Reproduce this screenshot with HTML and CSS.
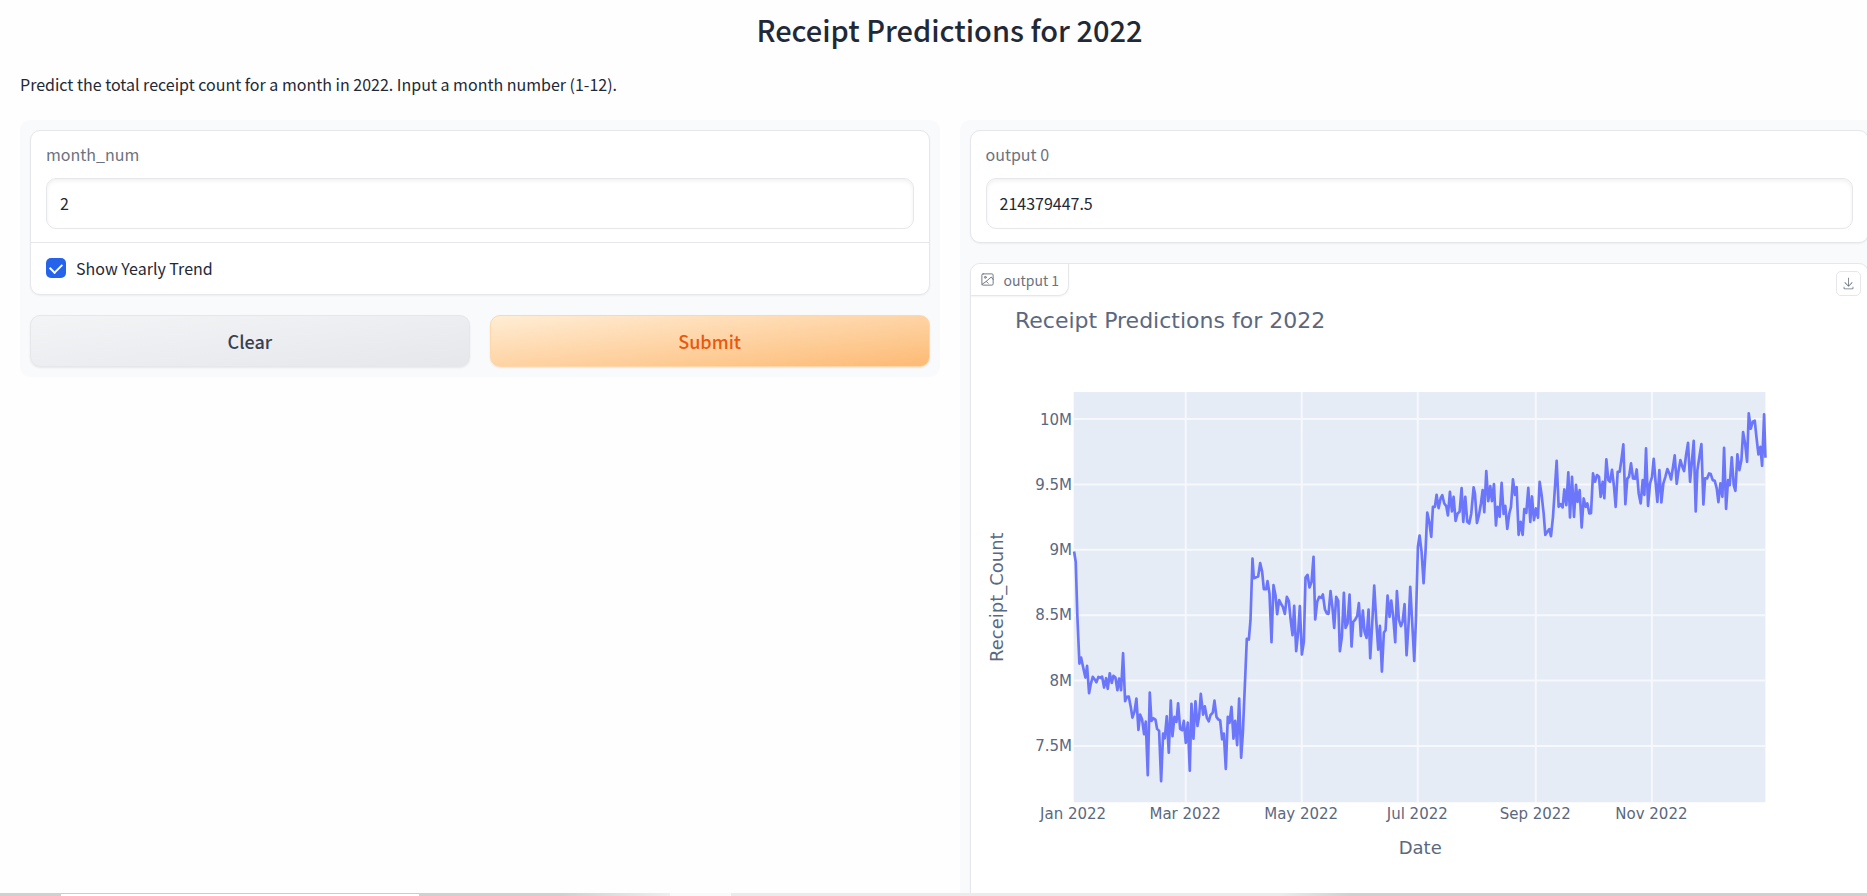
FILE: index.html
```html
<!DOCTYPE html>
<html lang="en">
<head>
<meta charset="utf-8">
<title>Receipt Predictions for 2022</title>
<link rel="stylesheet" href="styles.css">
</head>
<body>
<main class="app">
  <h1 class="title">Receipt Predictions for 2022</h1>
  <p class="description">Predict the total receipt count for a month in 2022. Input a month number (1-12).</p>
  <div class="columns">
    <form class="panel">
      <div class="card">
        <div class="field">
          <label class="label" for="month">month_num</label>
          <input class="textbox" id="month" type="text" value="2">
        </div>
        <label class="check-row"><input class="check" type="checkbox" checked><span>Show Yearly Trend</span></label>
      </div>
      <div class="actions">
        <button class="btn" type="button">Clear</button>
        <button class="btn btn-primary" type="button">Submit</button>
      </div>
    </form>
    <section class="panel">
      <div class="card">
        <div class="field">
          <label class="label" for="out0">output 0</label>
          <input class="textbox" id="out0" type="text" value="214379447.5" readonly>
        </div>
      </div>
      <div class="card plot-card">
        <div class="plot-label">
          <svg class="icon" viewBox="0 0 24 24" fill="none" stroke="currentColor" stroke-width="1.5" stroke-linecap="round" stroke-linejoin="round"><rect x="3" y="3" width="18" height="18" rx="2"/><circle cx="8.5" cy="8.5" r="1.5"/><path d="M3 20l7-5 3 3M10 15l8-7 3 4"/></svg>
          <span>output 1</span>
        </div>
        <button class="download" type="button" aria-label="Download">
          <svg viewBox="0 0 32 32" fill="currentColor"><path d="M26 24v4H6v-4H4v4a2 2 0 0 0 2 2h20a2 2 0 0 0 2-2v-4zm0-10l-1.41-1.41L17 20.17V2h-2v18.17l-7.59-7.58L6 14l10 10l10-10z"/></svg>
        </button>
        <svg class="chart" viewBox="971 264 897 641" role="img" aria-label="Receipt count by date">
          <rect class="plot-bg" x="1073.6" y="392" width="691.4" height="410"/>
          <path class="grid" d="M1185.6 392V802M1301.6 392V802M1417.5 392V802M1535.5 392V802M1651.5 392V802M1073.6 419H1765M1073.6 484.3H1765M1073.6 549.7H1765M1073.6 615H1765M1073.6 680.2H1765M1073.6 745.7H1765"/>
          <g class="trend" transform="translate(1060 520) scale(.33333)">
            <path d="M42 94L47 125L52 290L58 430L63 412L70 445L76 472L81 437L87 519L92 492L98 470L104 478L109 486L115 470L121 473L126 469L132 502L138 474L143 506L149 459L155 488L160 467L166 472L172 510L177 475L183 510L189 399L195 543L200 530L206 529L212 560L217 592L223 575L229 535L235 629L240 583L246 598L252 642L257 604L263 765L269 517L274 602L280 594L286 598L291 626L297 632L303 783L309 640L314 654L320 588L326 697L332 541L337 648L343 590L349 605L354 549L360 626L366 630L371 602L377 668L383 607L389 751L394 551L400 655L406 543L412 617L417 588L422 521L429 583L434 558L440 592L446 603L451 585L458 577L463 541L469 590L475 598L480 600L486 657L491 640L497 746L503 590L508 608L514 560L520 655L525 602L531 675L537 535L543 712L548 640L560 356L566 358L571 300L577 115L581 174L588 171L594 169L600 129L606 155L611 207L618 207L622 183L628 220L634 366L640 195L646 225L651 282L657 240L662 250L668 260L674 281L680 230L686 243L691 295L697 345L702 257L708 393L714 335L719 258L725 403L731 365L736 172L742 164L748 202L754 185L760 110L765 298L771 245L777 230L783 233L788 223L794 267L800 280L805 281L811 213L817 265L822 323L828 230L834 242L839 393L845 350L851 218L856 323L862 310L868 223L874 379L879 305L885 298L891 287L896 249L902 347L908 271L913 335L919 353L925 268L930 414L936 310L942 196L948 300L954 388L959 317L965 454L971 337L976 330L982 226L988 290L993 241L999 290L1005 366L1010 213L1016 298L1022 318L1027 305L1033 252L1039 405L1045 310L1050 200L1056 310L1062 422L1067 300L1073 80L1078 46L1084 95L1090 189L1096 90L1101-23L1107 5L1113 50L1118-40L1124-40L1129-76L1135-36L1141-65L1146-75L1152-50L1158-42L1163-14L1169-85L1175-26L1180-70L1186 2L1192-20L1198-25L1204-96L1209 5L1215-70L1221 5L1227 10L1233-20L1240-98L1244-80L1250 8L1256-15L1262-50L1267-90L1272-24L1278-147L1284-57L1290-102L1295-57L1301-108L1307 16L1312-40L1318-10L1324-112L1330-19L1335-43L1341 26L1347-20L1352-39L1358-122L1364-76L1369-99L1375 44L1381 5L1387 44L1392-33L1398-22L1404-97L1410 5L1415-71L1421 0L1427-35L1433-7L1438-115L1444-75L1450-20L1455 44L1461 35L1467 27L1472 48L1478-10L1484-100L1489-178L1495-40L1501-48L1507-38L1512-92L1518-45L1524-143L1529-8L1535-130L1541-10L1547-106L1552-55L1558-90L1564 22L1570-65L1576-40L1581-50L1587-20L1592-21L1598-140L1604-115L1610-135L1616-130L1621-70L1627-115L1632-66L1638-182L1644-120L1649-115L1655-151L1661-100L1666-40L1672-145L1678-145L1683-180L1689-227L1695-48L1701-125L1706-130L1712-170L1718-125L1724-124L1729-152L1735-80L1741-50L1747-120L1752-76L1757-215L1763-43L1769-110L1775-130L1780-184L1786-110L1791-55L1797-150L1803-53L1809-110L1815-130L1821-153L1827-140L1832-122L1838-160L1843-194L1849-109L1854-145L1860-180L1866-160L1871-147L1877-195L1883-232L1889-115L1894-170L1900-238L1906-26L1911-150L1917-190L1923-228L1929-47L1934-125L1940-125L1946-140L1951-138L1957-120L1963-118L1969-95L1974-54L1980-110L1986-70L1991-217L1997-34L2003-120L2008-105L2014-188L2020-105L2025-88L2031-197L2037-150L2043-180L2048-264L2054-230L2060-175L2065-320L2071-274L2077-295L2083-298L2088-250L2094-197L2100-220L2105-163L2111-317L2115-187"/>
          </g>
          <g class="ink">
            <text class="chart-title" x="1015" y="328">Receipt Predictions for 2022</text>
            <g class="tick end"><text x="1072" y="425">10M</text><text x="1072" y="490">9.5M</text><text x="1072" y="555">9M</text><text x="1072" y="620">8.5M</text><text x="1072" y="686">8M</text><text x="1072" y="751">7.5M</text></g>
            <g class="tick mid"><text x="1073" y="819">Jan 2022</text><text x="1185" y="819">Mar 2022</text><text x="1301" y="819">May 2022</text><text x="1417" y="819">Jul 2022</text><text x="1535" y="819">Sep 2022</text><text x="1651" y="819">Nov 2022</text></g>
            <text class="axis-title mid" x="1420" y="854">Date</text>
            <text class="axis-title mid" transform="translate(1003 597) rotate(-90)">Receipt_Count</text>
          </g>
        </svg>
      </div>
    </section>
  </div>
</main>
<div class="edge"></div>
</body>
</html>
```
FILE: styles.css
```css
* { box-sizing: border-box; }
html, body { margin: 0; height: 100%; overflow: hidden; }
body { background: #fefefe; color: #1f2937; font-family: "Noto Sans CJK SC", sans-serif; font-size: 16px; line-height: 24px; }
.app { margin-right: -12px; padding-left: 20px; }
.title { margin: 0; padding-top: 9px; font-size: 29px; line-height: 40px; font-weight: 500; text-align: center; }
.description { margin: 0; padding: 23px 0 24px; }
.columns { display: grid; grid-template-columns: 1fr 1fr; gap: 20px; align-items: start; }
.panel { display: flex; flex-direction: column; gap: 20px; padding: 10px; border-radius: 10px; background: #f9fafb; }
.card { border: 1px solid #e5e7eb; border-radius: 10px; background: #fff; box-shadow: 0 1px 2px rgba(0,0,0,.05); }
.field { padding: 11px 15px 13px; }
.label { display: block; margin-bottom: 12px; color: #6b7280; }
.textbox { display: block; width: 100%; height: 51px; padding: 0 13px 1px; border: 1px solid #e5e7eb; border-radius: 10px; background: #fff; box-shadow: inset 0 2px 4px rgba(0,0,0,.06); color: #1f2937; font: inherit; }
.check-row { display: flex; align-items: center; gap: 10px; padding: 13px 15px 14px; border-top: 1px solid #e5e7eb; }
.check { appearance: none; width: 20px; height: 20px; margin: 0; border-radius: 5px; background: #2563eb; display: grid; place-items: center; }
.check::after { content: ""; width: 10px; height: 6px; margin-top: -3px; border: solid #fff; border-width: 0 0 2px 2px; transform: rotate(-45deg); }
.actions { display: grid; grid-template-columns: 1fr 1fr; gap: 20px; }
.btn { height: 52px; padding-bottom: 2px; border: 1px solid #e5e7eb; border-radius: 10px; background: linear-gradient(to bottom right, #f3f4f6, #e5e7eb); box-shadow: 0 1px 2px rgba(0,0,0,.08); color: #374151; font: inherit; font-size: 18px; font-weight: 500; }
.btn-primary { border-color: #fed7aa; background: linear-gradient(to bottom right, #ffedd5, #fdba74); color: #ea580c; }
.plot-card { position: relative; overflow: hidden; }
.plot-label { position: absolute; top: 0; left: 0; display: flex; align-items: center; gap: 9px; height: 32px; padding: 0 9px; border: solid #e5e7eb; border-width: 0 1px 1px 0; border-radius: 0 0 10px 0; background: #fff; box-shadow: 0 1px 2px rgba(0,0,0,.05); color: #6b7280; font-size: 14px; }
.icon { width: 15px; height: 15px; }
.download { position: absolute; top: 7px; right: 7px; width: 25px; height: 25px; padding: 5px; border: 1px solid #e5e7eb; border-radius: 5px; background: #fff; color: #6b7280; }
.download svg { display: block; width: 100%; height: 100%; }
.chart { display: block; width: 100%; height: auto; }
.plot-bg { fill: #e5ecf6; }
.grid { stroke: #f6f8fc; stroke-width: 2; fill: none; }
.trend { fill: none; stroke: #6b76fa; stroke-width: 8; stroke-linejoin: round; }
.ink { fill: #5a6880; font-family: "DejaVu Sans", sans-serif; }
.chart-title { font-size: 22px; }
.tick { font-size: 15px; }
.axis-title { font-size: 18px; }
.end { text-anchor: end; }
.mid { text-anchor: middle; }
.edge { position: fixed; left: 0; right: 0; bottom: 0; height: 3px; background: linear-gradient(#ccc, #ccc) 61px 0 / 358px 1px no-repeat, linear-gradient(to right, #d0d0d0 61px, #fff 61px, #fff 419px, #d0d0d0 419px, #d0d0d0 560px, #eee 670px, #f9f9f9 670px, #f9f9f9 731px, #ebebeb 731px, #ebebeb 1280px, #d0d0d0 1350px); }
```
